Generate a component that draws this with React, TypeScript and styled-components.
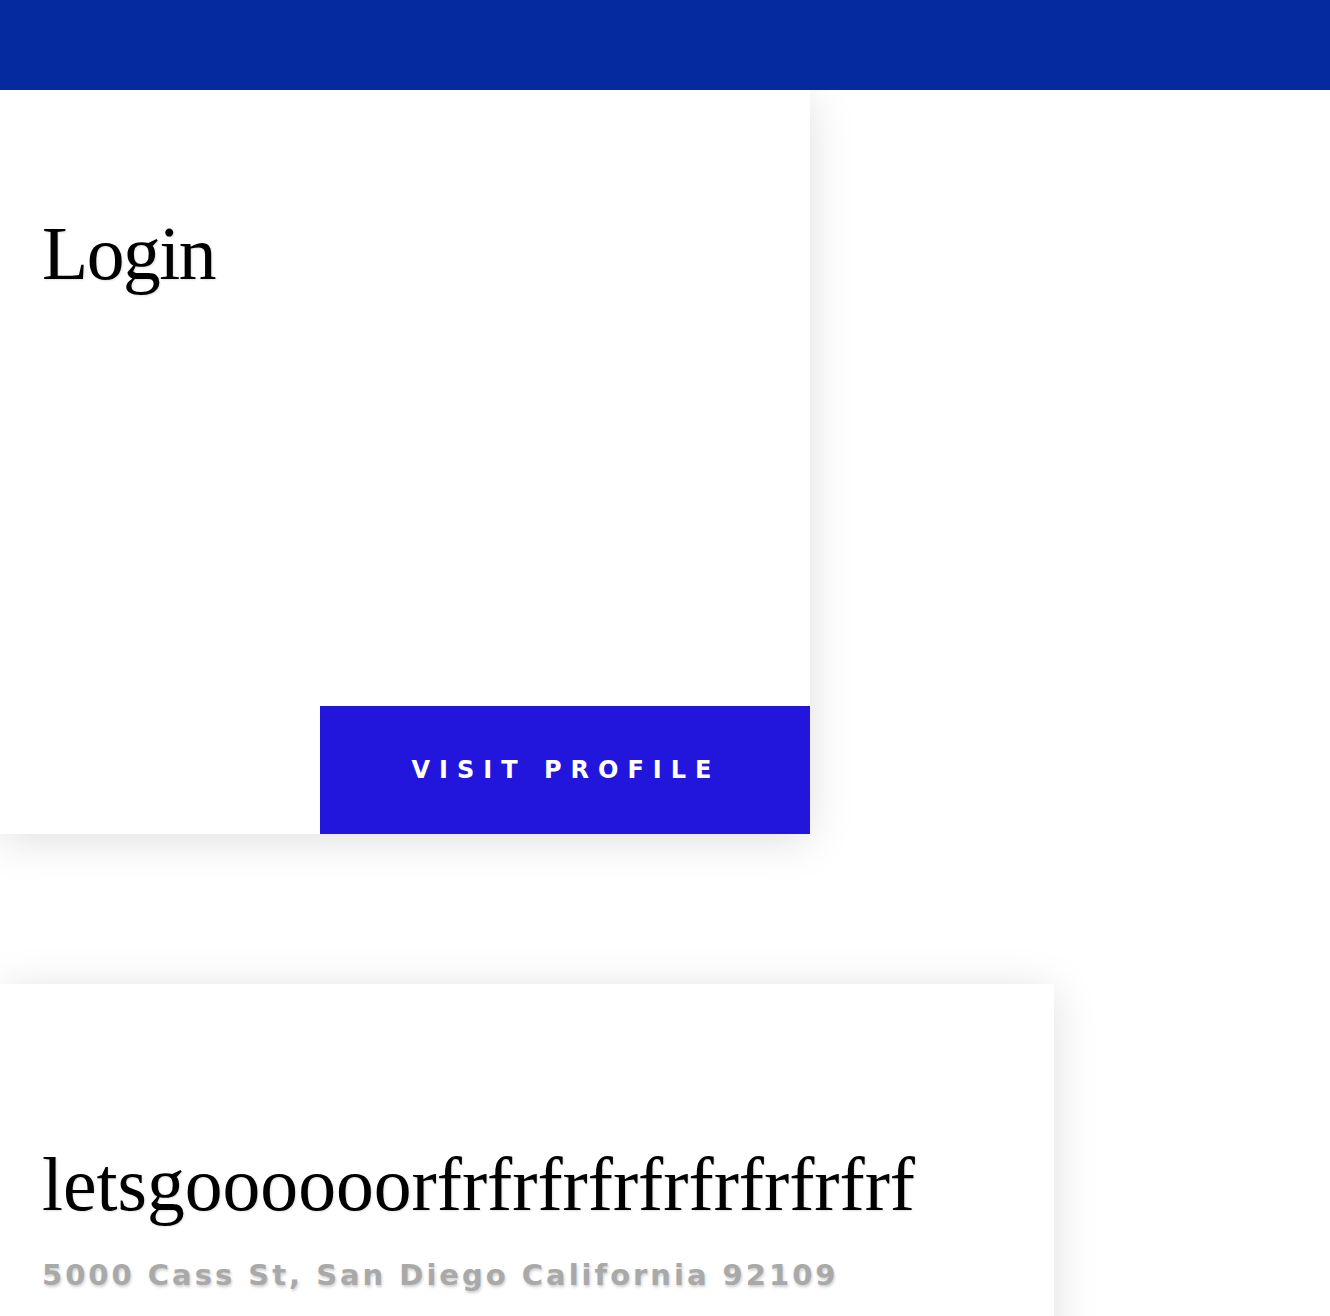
import React from "react";
import styled, { createGlobalStyle } from "styled-components";

const GlobalStyle = createGlobalStyle`
  html, body {
    margin: 0;
    padding: 0;
    background: #ffffff;
  }
  body {
    font-family: "Liberation Serif", serif;
    overflow: hidden;
  }
`;

const Page = styled.div`
  display: flex;
  flex-direction: column;
  min-height: 1316px;
`;

const TopBar = styled.header`
  position: relative;
  z-index: 2;
  height: 90px;
  background: #052aa0;
`;

const Card = styled.section<{ $width: number; $height?: number; $padTop: number }>`
  position: relative;
  z-index: 1;
  box-sizing: border-box;
  width: ${(p) => p.$width}px;
  ${(p) => (p.$height ? `height: ${p.$height}px;` : "")}
  padding-top: ${(p) => p.$padTop}px;
  background: #ffffff;
  box-shadow: 0 6px 42px rgba(0, 0, 0, 0.13);
  display: flex;
  flex-direction: column;
`;

const Stack = styled.div`
  display: flex;
  flex-direction: column;
  gap: 150px;
`;

const Title = styled.h1<{ $tracking?: number }>`
  margin: 0;
  padding-left: 42px;
  font-family: "Liberation Serif", "Times New Roman", serif;
  font-weight: 400;
  font-size: 75.6px;
  line-height: 76px;
  letter-spacing: ${(p) => p.$tracking ?? 0}px;
  color: #000000;
  white-space: nowrap;
  text-shadow: 1px 1px 2px rgba(0, 0, 0, 0.12);
`;

const Address = styled.p`
  margin: 38px 0 0;
  padding-left: 42px;
  font-family: "DejaVu Sans", "Liberation Sans", sans-serif;
  font-weight: 700;
  font-size: 29px;
  line-height: 29px;
  letter-spacing: 3px;
  color: #a9a9a9;
  white-space: nowrap;
  text-shadow: 1px 2px 3px rgba(0, 0, 0, 0.2);
`;

const VisitButton = styled.button`
  margin-top: auto;
  align-self: flex-end;
  width: 490px;
  height: 128px;
  border: none;
  background: #2216dc;
  color: #ffffff;
  font-family: "DejaVu Sans", "Liberation Sans", sans-serif;
  font-weight: 700;
  font-size: 24px;
  letter-spacing: 9px;
  text-transform: uppercase;
  cursor: pointer;
  padding: 0 0 0 2px;
`;

export default function App() {
  return (
    <>
      <GlobalStyle />
      <Page>
        <TopBar />
        <Stack>
          <Card $width={810} $height={744} $padTop={126}>
            <Title $tracking={-1.5}>Login</Title>
            <VisitButton>Visit Profile</VisitButton>
          </Card>
          <Card $width={1054} $height={420} $padTop={163}>
            <Title>letsgoooooorfrfrfrfrfrfrfrfrfrf</Title>
            <Address>5000 Cass St, San Diego California 92109</Address>
          </Card>
        </Stack>
      </Page>
    </>
  );
}
